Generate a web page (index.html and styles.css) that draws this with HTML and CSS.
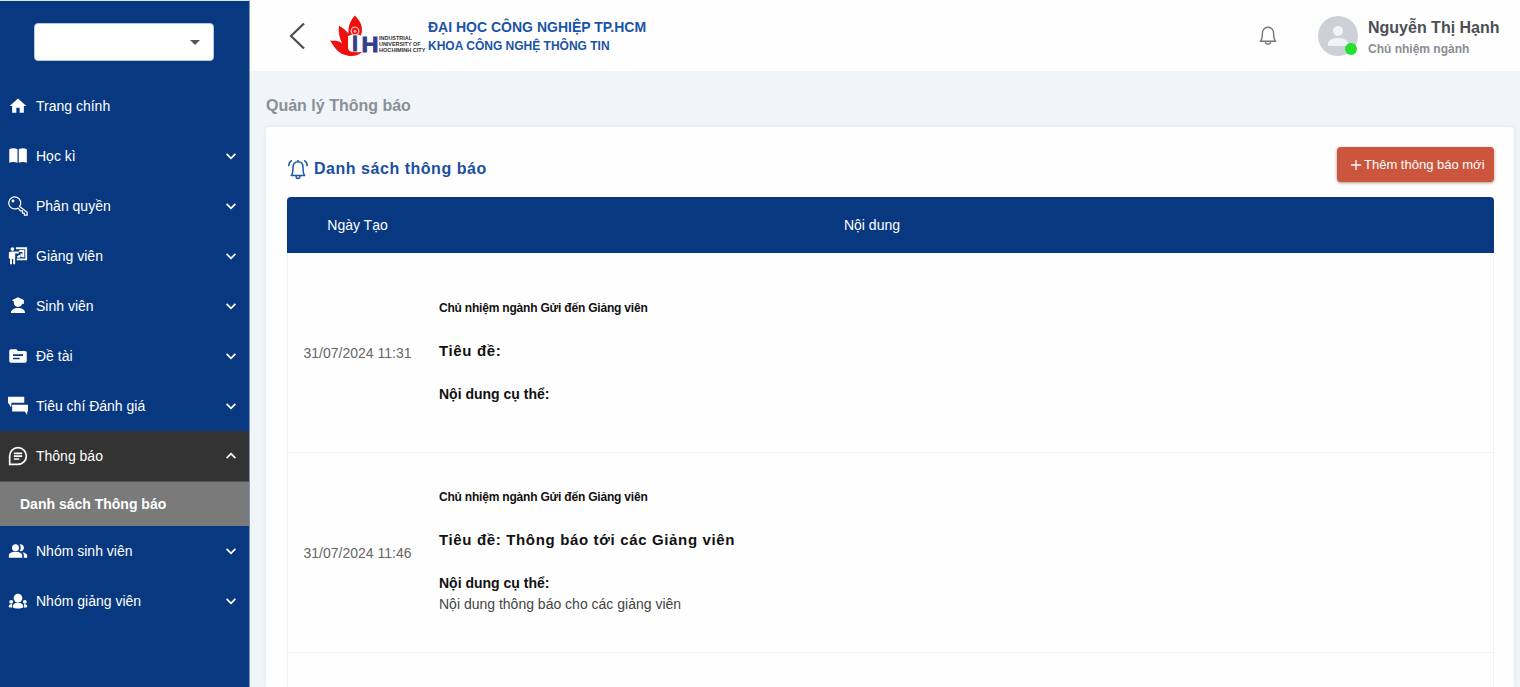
FILE: index.html
```html
<!DOCTYPE html>
<html lang="vi">
<head>
<meta charset="utf-8">
<title>Quản lý Thông báo</title>
<link rel="stylesheet" href="styles.css">
</head>
<body>
<svg class="defs" width="0" height="0">
  <symbol id="chev" viewBox="0 0 24 24"><path d="M4.500 8.500l7.500 7.500 7.500-7.500" fill="none" stroke="currentColor" stroke-width="3"/></symbol>
</svg>
<div class="app">
  <aside class="sidebar">
    <div class="select"><span class="caret"></span></div>
    <nav class="menu">
      <a class="item"><svg class="icon" viewBox="0 0 24 24"><path d="M10 20v-6h4v6h5v-8h3L12 3 2 12h3v8z"/></svg><span class="label">Trang chính</span></a>
      <a class="item"><svg class="icon" viewBox="0 0 24 24"><path d="M1.500 4C4 2.400 8.500 2.500 11.400 4v16C8.500 18.800 4 18.800 1.500 20zM12.900 4c2.700-1.500 7.200-1.600 9.700 0v16c-2.500-1.200-7-1.200-9.700 0z"/></svg><span class="label">Học kì</span><svg class="chev"><use href="#chev"/></svg></a>
      <a class="item"><svg class="icon" viewBox="0 0 24 24"><g fill="none" stroke="currentColor" stroke-width="1.500" stroke-linejoin="round"><path d="M13.900 12.500A7.200 7.200 0 1 0 9 15.400c1.200 0 2.300-.3 3.200-.8l2.700 3.200h2.400v2.600h2.400V23H23v-3.500z"/><circle cx="6" cy="6" r="1"/></g></svg><span class="label">Phân quyền</span><svg class="chev"><use href="#chev"/></svg></a>
      <a class="item"><svg class="icon" viewBox="0 0 24 24"><circle cx="5.300" cy="3.700" r="2.200"/><path d="M3.500 6.500h9.500v2.500H8.600V22H6.200v-6.500H4.800V22H2.400v-7H1V9a2.500 2.500 0 0 1 2.500-2.500z"/><path d="M9.500 2.700h12.300v13.300H10.500M13.500 6h5v6.500h-2.300M11 13h2.500v-2.200M16 9v4" fill="none" stroke="currentColor" stroke-width="2.200"/></svg><span class="label">Giảng viên</span><svg class="chev"><use href="#chev"/></svg></a>
      <a class="item"><svg class="icon" viewBox="0 0 24 24"><path d="M4.500 5L12 1.500 19.500 5l-.5.500V9.500h-1.500V6.500C17.500 11 15 13 12 13S6.500 11 7 6.300zM3.500 20.500c0-4 4-6 8.500-6s8.500 2 8.500 6z"/></svg><span class="label">Sinh viên</span><svg class="chev"><use href="#chev"/></svg></a>
      <a class="item"><svg class="icon" viewBox="0 0 24 24"><path fill-rule="evenodd" d="M3.500 4H10l2 2h8.500a2 2 0 0 1 2 2v10a2 2 0 0 1-2 2h-17a2 2 0 0 1-2-2V6a2 2 0 0 1 2-2zM6 10v2h12v-2zm0 4v2h8v-2z"/></svg><span class="label">Đề tài</span><svg class="chev"><use href="#chev"/></svg></a>
      <a class="item"><svg class="icon" viewBox="0 0 24 24"><path d="M0 1h19.500v7H4v5H3L1 9H0zM5 10.500h19v8h-1v4l-3-4H5z"/></svg><span class="label">Tiêu chí Đánh giá</span><svg class="chev"><use href="#chev"/></svg></a>
      <a class="item active"><svg class="icon" viewBox="0 0 24 24"><path d="M2 22V12A10 10 0 1 1 12 22zM7 8.800h10M7 12.200h10M7 15.600h6.500" fill="none" stroke="currentColor" stroke-width="2"/></svg><span class="label">Thông báo</span><svg class="chev up"><use href="#chev"/></svg></a>
      <a class="subitem"><span class="label">Danh sách Thông báo</span></a>
      <a class="item"><svg class="icon" viewBox="0 0 24 24"><circle cx="9" cy="8" r="4.200"/><path d="M1 20v-2.500C1 14.500 5 13 9 13s8 1.500 8 4.500V20zM14 3.900a4.200 4.200 0 1 1 0 8.200c1.700-2.400 1.700-5.800 0-8.200zM17.500 13.400c3 .6 5.500 2 5.500 4.100V20h-4v-2.500c0-1.700-.5-3-1.500-4.100z"/></svg><span class="label">Nhóm sinh viên</span><svg class="chev"><use href="#chev"/></svg></a>
      <a class="item"><svg class="icon" viewBox="0 0 24 24"><circle cx="12" cy="8.500" r="5.200"/><circle cx="3.800" cy="13" r="2.300"/><circle cx="20.200" cy="13" r="2.300"/><path d="M5.500 19.500c0-4 3-5.500 6.500-5.500s6.500 1.500 6.500 5.500c-2.500 2-10.500 2-13 0zM.8 19c0-2.400 1.200-3.300 4.200-3.300L4.500 20c-1.700 0-3-.3-3.700-1zM23.200 19c0-2.400-1.200-3.300-4.200-3.300l.5 4.300c1.700 0 3-.3 3.700-1z"/></svg><span class="label">Nhóm giảng viên</span><svg class="chev"><use href="#chev"/></svg></a>
    </nav>
  </aside>
  <div class="page">
    <header class="topbar">
      <svg class="back" viewBox="0 0 16 28"><path d="M15 1.500L2 14l13 12.500" fill="none" stroke="currentColor" stroke-width="2.200"/></svg>
      <svg class="logo" viewBox="0 0 97 43">
        <path fill="#f01010" d="M25 1.500c4 4.500 8 9 6.800 17l-1.300 4-12 1 0 12c1 2.500 6 3.500 13.500 2.200-3 3.800-9 5-14 4C8 40 5 34 0 26.500c5 .5 9 0 12 2.800C9.500 24 8 18 9 11.500c4 2.500 7 5 9.500 8C18 12 20.500 6 25 1.500z"/>
        <path d="M18 22l4-1.500h6l4 1.500v15.500h-7c-4.500 0-7-1.500-7-5z" fill="#fefefe"/>
        <circle cx="25" cy="17" r="3.800" fill="#f01010" stroke="#fbb8b3" stroke-width="1.300"/><circle cx="25" cy="17.300" r="1.500" fill="#f9aaa4"/>
        <text class="logo-big" x="22" y="37">I</text>
        <text class="logo-big" x="31.500" y="37.700" textLength="17" lengthAdjust="spacingAndGlyphs">H</text>
        <g class="logo-small"><text x="49" y="26.300" textLength="33" lengthAdjust="spacingAndGlyphs">INDUSTRIAL</text><text x="49" y="31.800" textLength="41.500" lengthAdjust="spacingAndGlyphs">UNIVERSITY OF</text><text x="49" y="37.500" textLength="46.500" lengthAdjust="spacingAndGlyphs">HOCHIMINH CITY</text></g>
      </svg>
      <div class="brand"><div class="school">ĐẠI HỌC CÔNG NGHIỆP TP.HCM</div><div class="faculty">KHOA CÔNG NGHỆ THÔNG TIN</div></div>
      <svg class="bell" viewBox="0 0 18 20"><path d="M1.300 15.300h15.400c-1.700-1.500-2-3.500-2-7.300C14.700 4 12.500 1.300 9 1.300S3.300 4 3.300 8c0 3.800-.3 5.800-2 7.300zM6.300 15.800c.3 3.200 5.100 3.200 5.400 0" fill="none" stroke="currentColor" stroke-width="1.400" stroke-linejoin="round"/></svg>
      <div class="avatar"><svg viewBox="0 0 40 40"><circle cx="20" cy="20" r="20" fill="#cdd0d7"/><circle cx="20" cy="15" r="5" fill="#f1f3f9"/><path d="M10 30v-2.500c0-4 5.500-5.500 10-5.500s10 1.500 10 5.500V30z" fill="#f1f3f9"/></svg><span class="status"></span></div>
      <div class="user"><div class="name">Nguyễn Thị Hạnh</div><div class="role">Chủ nhiệm ngành</div></div>
    </header>
    <main class="main">
      <h1 class="title">Quản lý Thông báo</h1>
      <section class="card">
        <div class="card-head">
          <svg class="ring" viewBox="0 0 20 21"><path d="M3.300 16.500h13.400c-1.400-1.500-1.700-3.500-1.700-8C15 5 13.200 2.700 10 2.700S5 5 5 8.500c0 4.500-.3 6.500-1.700 8zM8 17c.2 3.300 3.800 3.300 4 0M10 2.700V1M3.800 1.300C1.700 2.600.7 4.500.8 7.300M16.200 1.300c2.100 1.300 3.100 3.200 3 6" fill="none" stroke="currentColor" stroke-width="1.500" stroke-linejoin="round"/></svg>
          <h2 class="heading">Danh sách thông báo</h2>
          <button class="add"><svg class="plus" viewBox="0 0 10 10"><path d="M5 0v10M0 5h10" stroke="currentColor" stroke-width="1.300"/></svg><span>Thêm thông báo mới</span></button>
        </div>
        <div class="table">
          <div class="thead"><div class="date"><span>Ngày Tạo</span></div><div class="center"><span>Nội dung</span></div></div>
          <div class="row">
            <div class="date"><span>31/07/2024 11:31</span></div>
            <div class="content"><div class="from">Chủ nhiệm ngành Gửi đến Giảng viên</div><div class="subject">Tiêu đề:</div><div class="detail">Nội dung cụ thể:</div></div>
          </div>
          <div class="row">
            <div class="date"><span>31/07/2024 11:46</span></div>
            <div class="content"><div class="from">Chủ nhiệm ngành Gửi đến Giảng viên</div><div class="subject">Tiêu đề: Thông báo tới các Giảng viên</div><div class="detail">Nội dung cụ thể:</div><div class="text">Nội dung thông báo cho các giảng viên</div></div>
          </div>
        </div>
      </section>
    </main>
  </div>
</div>
</body>
</html>
```

FILE: styles.css
```css
* { box-sizing: border-box; }
body { margin: 0; font-family: "Liberation Sans", Arial, sans-serif; background: #f0f5f9; }
h1, h2 { margin: 0; }
svg { display: block; flex: none; }
.defs { position: absolute; }
.app { display: flex; height: 687px; }
.sidebar { width: 250px; flex: none; background: #08387f; border-top: 1px solid #d3e6f3; border-right: 1px solid #8199bd; color: #fff; }
.select { width: 180px; height: 38px; margin: 22px 0 20px 34px; background: #fff; border: 1px solid #b9c6dc; border-radius: 4px; display: flex; align-items: center; justify-content: flex-end; padding-right: 13px; }
.caret { border: 5px solid transparent; border-top-color: #555; border-bottom: 0; }
.menu { display: flex; flex-direction: column; }
.item { height: 50px; display: flex; align-items: center; padding: 0 11px 0 8px; font-size: 14px; }
.icon { width: 20px; height: 20px; fill: currentColor; margin-right: 8px; }
.label { white-space: nowrap; }
.chev { width: 14px; height: 14px; margin-left: auto; }
.up { transform: rotate(180deg); }
.active { background: #333; }
.subitem { height: 45px; background: #7a7a7a; border-top: 1px solid #555; display: flex; align-items: center; padding-left: 20px; font-size: 14px; font-weight: bold; }
.page { flex: 1; min-width: 0; display: flex; flex-direction: column; }
.topbar { height: 71px; flex: none; background: #fefefe; display: flex; align-items: center; padding: 0 20px 0 39px; }
.back { width: 16px; height: 28px; color: #4a4d52; margin-right: 25px; }
.logo { width: 97px; height: 43px; margin-right: 1px; }
.logo-big { font: bold 21.500px "Liberation Sans", sans-serif; fill: #343c8c; stroke: #343c8c; stroke-width: .8px; }
.logo-small { font: bold 5px "Liberation Sans", sans-serif; fill: #333; }
.brand { color: #1a54a8; font-weight: bold; white-space: nowrap; }
.school { font-size: 14px; line-height: 20px; }
.faculty { font-size: 12px; line-height: 18px; }
.bell { width: 18px; height: 20px; color: #777; margin-left: auto; margin-right: 41px; }
.avatar { position: relative; width: 40px; height: 40px; margin-right: 10px; }
.status { position: absolute; right: 1px; bottom: 1px; width: 12px; height: 12px; border-radius: 50%; background: #23e02e; }
.user { width: 132px; padding-top: 4px; font-weight: bold; white-space: nowrap; }
.name { font-size: 16px; line-height: 22px; color: #4b4f56; }
.role { font-size: 12px; line-height: 20px; color: #8a8d94; }
.main { flex: 1; padding: 24px 6px 0 16px; display: flex; flex-direction: column; }
.title { font-size: 16px; line-height: 22px; color: #8a8f98; margin-bottom: 10px; }
.card { flex: 1; display: flex; flex-direction: column; background: #fefefe; border-radius: 4px 4px 0 0; box-shadow: 0 0 4px rgba(40,60,80,.09); padding: 20px 20px 0 21px; }
.card-head { display: flex; height: 50px; align-items: flex-start; }
.ring { width: 20px; height: 21px; color: #2458a6; margin: 12px 6px 0 1px; }
.heading { font-size: 16px; line-height: 22px; color: #1a4fa0; margin-top: 11px; letter-spacing: .53px; }
.add { margin-left: auto; width: 157px; height: 35px; border: 0; border-radius: 4px; background: #cb563d; color: #fff; font: 13px "Liberation Sans", sans-serif; display: flex; align-items: center; padding: 0 0 0 14px; gap: 3px; white-space: nowrap; box-shadow: 0 1px 3px rgba(100,40,20,.5); }
.plus { width: 10px; height: 10px; }
.table { flex: 1; display: flex; flex-direction: column; box-shadow: inset 1px 0 #f0f1f3, inset -1px 0 #f0f1f3; border-radius: 4px 4px 0 0; }
.row { height: 200px; display: flex; border-bottom: 1px solid #f0f1f3; }
.date { width: 141px; flex: none; display: flex; align-items: center; justify-content: center; font-size: 14px; color: #666; white-space: nowrap; }
.thead { height: 56px; display: flex; background: #08387f; border-radius: 4px 4px 0 0; }
.thead .date { color: #fff; }
.center { width: 888px; display: flex; align-items: center; justify-content: center; color: #fff; font-size: 14px; }
.content { display: flex; flex-direction: column; justify-content: center; padding: 0 0 2px 11px; white-space: nowrap; color: #111; }
.from { font-size: 12px; font-weight: bold; line-height: 18px; margin-bottom: 23px; letter-spacing: -.2px; }
.subject { font-size: 15px; font-weight: bold; line-height: 22px; margin-bottom: 22px; letter-spacing: .65px; }
.detail { font-size: 14px; font-weight: bold; line-height: 20px; }
.text { font-size: 14px; line-height: 22px; color: #444; }
```
